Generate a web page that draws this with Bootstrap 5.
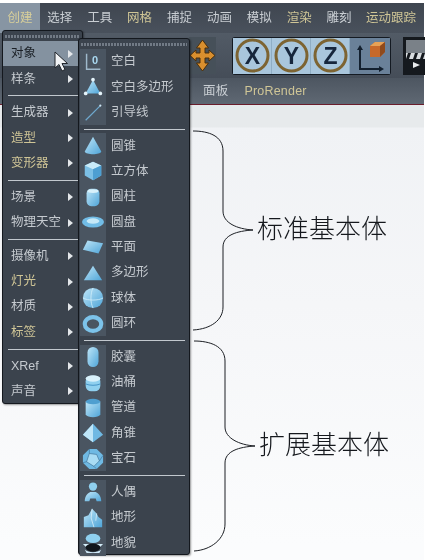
<!DOCTYPE html>
<html lang="zh-CN">
<head>
    <meta charset="UTF-8">
    <meta name="viewport" content="width=device-width, initial-scale=1.0">
    <title>创建菜单</title>
    <link href="https://cdn.jsdelivr.net/npm/bootstrap@5.3.0/dist/css/bootstrap.min.css" rel="stylesheet">
    <style>
        body {
            background: #fff;
            overflow: hidden;
            font-family: "Liberation Sans", "Noto Sans CJK SC", sans-serif;
        }
        .stage {
            position: relative;
            width: 427px;
            height: 560px;
            padding: 3px 3px 0 0;
            overflow: hidden;
            filter: blur(.3px);
        }
        .top-menu {
            height: 30px;
            background: linear-gradient(#3f4650, #49515c);
            font-size: 12.5px;
            color: #c9ced3;
        }
        .top-menu span { flex: none; width: 39.9px; text-align: center; white-space: nowrap; line-height: 30px; }
        .top-menu span.wide-item { width: 64px; }
        .top-menu .is-open { background: #8795a3; color: #d8cf9a; }
        .gold { color: #cfc596 !important; }
        .tool-row {
            height: 45px;
            background: linear-gradient(#525b66, #454d58);
        }
        .move-tool { margin-left: 189px; width: 27px; height: 37px; background: #465059; }
        .axis-group {
            margin-left: 16px;
            width: 159px;
            height: 38px;
            background: #141a22;
            border-radius: 3px;
            padding: 1px;
        }
        .axis-btn {
            width: 39px;
            height: 36px;
            background: #a9c6dc;
            border-right: 1px solid #8fadc4;
        }
        .axis-last { width: 40px; height: 36px; background: #6a8199; }
        .clip-tool { margin-left: 12px; width: 22px; height: 38px; background: #15191e; padding: 3px 0 0 3px; }
        .tab-row {
            height: 27px;
            padding-left: 203px;
            background: linear-gradient(#4d5661, #5f6873);
            border-bottom: 1px solid #6b1d2c;
            font-size: 12.5px;
            color: #c9ced3;
            letter-spacing: .2px;
        }
        .view-area {
            height: 455px;
            background: linear-gradient(#e7eaec 0, #e7eaec 22px, #f0f2f5 23px, #f5f6f8 200px, #fbfcfd 440px);
        }
        .brace-layer { position: absolute; left: 0; top: 0; pointer-events: none; }
        .shape-label {
            position: absolute;
            font-size: 26px;
            line-height: 30px;
            font-weight: 300;
            color: #15181d;
            white-space: nowrap;
        }
        .menu-panel.dropdown-menu {
            display: block;
            min-width: 0;
            margin: 0;
            padding: 0;
            background: #3b434d;
            border: 1px solid #14181e;
            border-radius: 3px;
            box-shadow: 1px 1px 2px rgba(0, 0, 0, .4);
            font-size: 12.5px;
        }
        .menu-left { left: 2px; top: 30px; width: 81px; height: 374px; z-index: 2; }
        .menu-right { left: 78px; top: 38px; width: 112px; height: 517px; z-index: 3; }
        .grip {
            height: 10px;
            margin: 0 2px;
            background: repeating-linear-gradient(90deg, #717a85 0 2px, #3a424d 2px 3px);
            background-size: 100% 3px;
            background-position: 0 4px;
            background-repeat: no-repeat;
        }
        .menu-panel .dropdown-item {
            height: 25.35px;
            padding: 0;
            color: #c5cacf;
            font-size: 12.5px;
            line-height: 25px;
            background: transparent;
        }
        .menu-left .dropdown-item { padding: 0 9px 0 8px; }
        .menu-left .dropdown-item.active { background: #8492a0; color: #1b2026; }
        .menu-panel .dropdown-divider {
            height: 8.4px;
            margin: 0;
            border: 0;
            background: linear-gradient(#c2c8ce, #c2c8ce) center / 100% 1px no-repeat;
        }
        .menu-left .dropdown-divider { margin: 0 1px 0 5px; }
        .menu-right .dropdown-divider { margin: 0 4px 0 5px; }
        .tri-arrow { width: 0; height: 0; border-left: 5px solid #e4e7ea; border-top: 4px solid transparent; border-bottom: 4px solid transparent; }
        .icon-cell {
            width: 26px;
            height: 25.35px;
            margin: 0 5px 0 1px;
            background: #4a5561;
            display: flex;
            align-items: center;
            justify-content: center;
        }
        .mouse-arrow { position: absolute; left: 54px; top: 51px; z-index: 4; }
    </style>
</head>
<body>
    <svg width="0" height="0" class="position-absolute">
        <defs>
            <linearGradient id="blue" x1="0" y1="0" x2="1" y2="1">
                <stop offset="0" stop-color="#bfe6f8"/>
                <stop offset="1" stop-color="#4fa5d8"/>
            </linearGradient>
            <symbol id="i-null" viewBox="0 0 24 24"><path d="M5 3v17h15" fill="none" stroke="#9fb9cc" stroke-width="1.6"/><text x="11" y="14" font-size="12" font-weight="700" fill="#a9d8f0" font-family="Liberation Sans">0</text></symbol>
            <symbol id="i-poly" viewBox="0 0 24 24"><path d="M12 4l8 15H4z" fill="url(#blue)"/><circle cx="12" cy="4" r="2" fill="#e5f4fb"/><circle cx="4" cy="19" r="2" fill="#e5f4fb"/><circle cx="20" cy="19" r="2" fill="#e5f4fb"/></symbol>
            <symbol id="i-guide" viewBox="0 0 24 24"><path d="M4 21L20 5" stroke="#6fa9cf" stroke-width="1.3"/><circle cx="20" cy="5" r="1.2" fill="#cfe6f3"/></symbol>
            <symbol id="i-cone" viewBox="0 0 24 24"><path d="M12 2L3 18c1 4 17 4 18 0z" fill="url(#blue)"/></symbol>
            <symbol id="i-cube" viewBox="0 0 24 24"><path d="M12 2l9 4v11l-9 5-9-5V6z" fill="#7cc0e6"/><path d="M12 2l9 4-9 4-9-4z" fill="#c9ebf9"/><path d="M12 10v12l9-5V6z" fill="#4d9fd2"/></symbol>
            <symbol id="i-cyl" viewBox="0 0 24 24"><rect x="5" y="3" width="14" height="19" rx="5" fill="url(#blue)"/><ellipse cx="12" cy="5.5" rx="6" ry="2" fill="#d8f1fb"/></symbol>
            <symbol id="i-disc" viewBox="0 0 24 24"><ellipse cx="12" cy="12" rx="12" ry="6" fill="#71bce6"/><ellipse cx="12" cy="11" rx="7" ry="3" fill="#c6e9f8"/></symbol>
            <symbol id="i-plane" viewBox="0 0 24 24"><path d="M6 5l17 3-5 11L1 15z" fill="url(#blue)"/></symbol>
            <symbol id="i-tri" viewBox="0 0 24 24"><path d="M12 4l10 16H2z" fill="url(#blue)"/></symbol>
            <symbol id="i-sphere" viewBox="0 0 24 24"><circle cx="12" cy="12" r="11" fill="url(#blue)"/><path d="M1 12c5 3 17 3 22 0M12 1c-3 6-3 16 0 22" fill="none" stroke="#d8f1fb" stroke-width=".8"/></symbol>
            <symbol id="i-torus" viewBox="0 0 24 24"><ellipse cx="12" cy="12" rx="9" ry="7.5" fill="none" stroke="#7cc3ea" stroke-width="4.5"/></symbol>
            <symbol id="i-capsule" viewBox="0 0 24 24"><rect x="6" y="1" width="12" height="22" rx="6" fill="url(#blue)"/></symbol>
            <symbol id="i-tank" viewBox="0 0 24 24"><rect x="4" y="4" width="16" height="17" rx="6" fill="#8fd0ef"/><ellipse cx="12" cy="7" rx="8" ry="3.5" fill="#d8f1fb"/><path d="M4 13c4 2 12 2 16 0" stroke="#3f8fc4" fill="none"/></symbol>
            <symbol id="i-tube" viewBox="0 0 24 24"><path d="M4 5v14c2 4 14 4 16 0V5z" fill="url(#blue)"/><ellipse cx="12" cy="5" rx="8" ry="3" fill="#4f9fd0"/></symbol>
            <symbol id="i-pyr" viewBox="0 0 24 24"><path d="M12 2L1 14l11 8 11-8z" fill="#6fb9e3"/><path d="M12 2L1 14l11 8z" fill="#bfe6f8"/></symbol>
            <symbol id="i-gem" viewBox="0 0 24 24"><path d="M8 1h8l7 7v8l-7 7H8l-7-7V8z" fill="#6fb9e3"/><path d="M8 6l8 1 3 7-6 6-8-5zM8 1v5M19 14l4-6M5 15l-4 1M13 20l3 3" fill="#a9dcf4" stroke="#3d6f94" stroke-width=".7"/></symbol>
            <symbol id="i-figure" viewBox="0 0 24 24"><circle cx="12" cy="6" r="4.5" fill="#8fd0ef"/><path d="M3 22c0-6 4-9 6-10h6c2 1 6 4 6 10h-5l-1-3h-6l-1 3z" fill="url(#blue)"/></symbol>
            <symbol id="i-land" viewBox="0 0 24 24"><path d="M2 22V11l5-2 4-7 5 5 2 4 4 3v8z" fill="url(#blue)"/><path d="M11 2l-1 10 3 10M16 7l-1 8" fill="none" stroke="#dff3fb" stroke-width=".8"/></symbol>
            <symbol id="i-sky" viewBox="0 0 24 24"><ellipse cx="12" cy="7" rx="8" ry="5" fill="#8fd0ef"/><path d="M1 13h22l-3 3H4z" fill="#d5eefa"/><ellipse cx="12" cy="17" rx="8" ry="4.500" fill="#10161c"/><path d="M3 19c4 4 14 4 18 0l-2 4H5z" fill="#cfeafa"/></symbol>
        </defs>
    </svg>

    <div class="stage">
        <nav class="top-menu d-flex">
            <span class="is-open">创建</span>
            <span>选择</span>
            <span>工具</span>
            <span class="gold">网格</span>
            <span>捕捉</span>
            <span>动画</span>
            <span>模拟</span>
            <span class="gold">渲染</span>
            <span>雕刻</span>
            <span class="gold wide-item">运动跟踪</span>
        </nav>

        <div class="tool-row d-flex align-items-center">
            <div class="move-tool d-flex align-items-center justify-content-center">
                <svg width="27" height="33" viewBox="0 0 27 33"><path d="M13.500 1l6 8h-3.500v5h4v-3l6 5.500-6 5.500v-3h-4v5h3.500l-6 8-6-8H11v-5H7v3l-6-5.500L7 11v3h4V9H7.500z" fill="#d98f2e" stroke="#4a2f0c" stroke-width="1"/></svg>
            </div>
            <div class="axis-group d-flex">
                <div class="axis-btn d-flex align-items-center justify-content-center"><svg width="35" height="35" viewBox="0 0 35 35"><circle cx="17.500" cy="17.500" r="15.500" fill="#a9c6dc" stroke="#7d6432" stroke-width="3"/><text x="17.500" y="25.500" text-anchor="middle" font-size="23" font-weight="700" fill="#16263c" font-family="Liberation Sans">X</text></svg></div>
                <div class="axis-btn d-flex align-items-center justify-content-center"><svg width="35" height="35" viewBox="0 0 35 35"><circle cx="17.500" cy="17.500" r="15.500" fill="#a9c6dc" stroke="#7d6432" stroke-width="3"/><text x="17.500" y="25.500" text-anchor="middle" font-size="23" font-weight="700" fill="#16263c" font-family="Liberation Sans">Y</text></svg></div>
                <div class="axis-btn d-flex align-items-center justify-content-center"><svg width="35" height="35" viewBox="0 0 35 35"><circle cx="17.500" cy="17.500" r="15.500" fill="#a9c6dc" stroke="#7d6432" stroke-width="3"/><text x="17.500" y="25.500" text-anchor="middle" font-size="23" font-weight="700" fill="#16263c" font-family="Liberation Sans">Z</text></svg></div>
                <div class="axis-last d-flex align-items-center justify-content-center"><svg width="36" height="34" viewBox="0 0 36 34"><path d="M8 9v21h20" fill="none" stroke="#13202f" stroke-width="2"/><path d="M8 6l-3 5h6zM32 30l-5-3v6z" fill="#13202f"/><path d="M18 7l5-4h10v10l-5 5H18z" fill="#c7692a"/><path d="M18 7l5-4h10l-5 4z" fill="#e7a256"/><path d="M28 7l5-4v10l-5 5z" fill="#8f4a1c"/></svg></div>
            </div>
            <div class="clip-tool"><svg width="19" height="32" viewBox="0 0 19 32"><rect width="19" height="13" fill="#7a8188"/><rect y="13" width="19" height="6" fill="#d9dde0"/><path d="M2 13h3l-2 6H0zM9 13h3l-2 6H7zM16 13h3l-2 6h-3z" fill="#15191e"/><path d="M7 22l7 3-7 3z" fill="#e9ecee"/></svg></div>
        </div>

        <div class="tab-row d-flex align-items-center gap-3">
            <span>面板</span>
            <span class="gold">ProRender</span>
        </div>

        <div class="view-area"></div>

        <svg class="brace-layer" width="427" height="560" fill="none" stroke="#1c1f24" stroke-width="1">
            <path d="M193 131c16 0 30 5 30 20v60c0 12 14 18 30 19-16 1-30 5-30 17v60c0 13-12 22-30 23"/>
            <path d="M194 341c16 0 31 5 31 20v66c0 11 14 18 30 19-16 1-30 5-30 17v61c0 15-14 26-31 27"/>
        </svg>
        <div class="shape-label" style="left:257px;top:214px">标准基本体</div>
        <div class="shape-label" style="left:259px;top:430px">扩展基本体</div>

        <div class="menu-panel menu-left dropdown-menu">
            <div class="grip"></div>
            <a class="dropdown-item active d-flex align-items-center justify-content-between" href="#">对象<i class="tri-arrow"></i></a>
            <a class="dropdown-item d-flex align-items-center justify-content-between" href="#">样条<i class="tri-arrow"></i></a>
            <div class="dropdown-divider"></div>
            <a class="dropdown-item d-flex align-items-center justify-content-between" href="#">生成器<i class="tri-arrow"></i></a>
            <a class="dropdown-item gold d-flex align-items-center justify-content-between" href="#">造型<i class="tri-arrow"></i></a>
            <a class="dropdown-item gold d-flex align-items-center justify-content-between" href="#">变形器<i class="tri-arrow"></i></a>
            <div class="dropdown-divider"></div>
            <a class="dropdown-item d-flex align-items-center justify-content-between" href="#">场景<i class="tri-arrow"></i></a>
            <a class="dropdown-item d-flex align-items-center justify-content-between" href="#">物理天空<i class="tri-arrow"></i></a>
            <div class="dropdown-divider"></div>
            <a class="dropdown-item d-flex align-items-center justify-content-between" href="#">摄像机<i class="tri-arrow"></i></a>
            <a class="dropdown-item gold d-flex align-items-center justify-content-between" href="#">灯光<i class="tri-arrow"></i></a>
            <a class="dropdown-item d-flex align-items-center justify-content-between" href="#">材质<i class="tri-arrow"></i></a>
            <a class="dropdown-item gold d-flex align-items-center justify-content-between" href="#">标签<i class="tri-arrow"></i></a>
            <div class="dropdown-divider"></div>
            <a class="dropdown-item d-flex align-items-center justify-content-between" href="#">XRef<i class="tri-arrow"></i></a>
            <a class="dropdown-item d-flex align-items-center justify-content-between" href="#">声音<i class="tri-arrow"></i></a>
        </div>

        <div class="menu-panel menu-right dropdown-menu" id="objectMenu"></div>

        <svg class="mouse-arrow" width="15" height="22" viewBox="0 0 15 22"><path d="M1 1v16l4-3.500 3 6.500 3-1.500-3-6h5.500z" fill="#f1f3f5" stroke="#20252b" stroke-width="1"/></svg>
    </div>

    <script>
        // object menu: sections of [icon, label], a divider between each
        const sections = [
            [['null', '空白'], ['poly', '空白多边形'], ['guide', '引导线']],
            [['cone', '圆锥'], ['cube', '立方体'], ['cyl', '圆柱'], ['disc', '圆盘'], ['plane', '平面'], ['tri', '多边形'], ['sphere', '球体'], ['torus', '圆环']],
            [['capsule', '胶囊'], ['tank', '油桶'], ['tube', '管道'], ['pyr', '角锥'], ['gem', '宝石']],
            [['figure', '人偶'], ['land', '地形'], ['sky', '地貌']]
        ];
        const rows = sections.map(items => items.map(([icon, label]) =>
            `<a class="dropdown-item d-flex align-items-center" href="#"><span class="icon-cell"><svg width="22" height="22"><use href="#i-${icon}"/></svg></span>${label}</a>`
        ).join(''));
        document.getElementById('objectMenu').innerHTML = '<div class="grip"></div>' + rows.join('<div class="dropdown-divider"></div>');
    </script>
    <script src="https://cdn.jsdelivr.net/npm/bootstrap@5.3.0/dist/js/bootstrap.bundle.min.js"></script>
</body>
</html>
